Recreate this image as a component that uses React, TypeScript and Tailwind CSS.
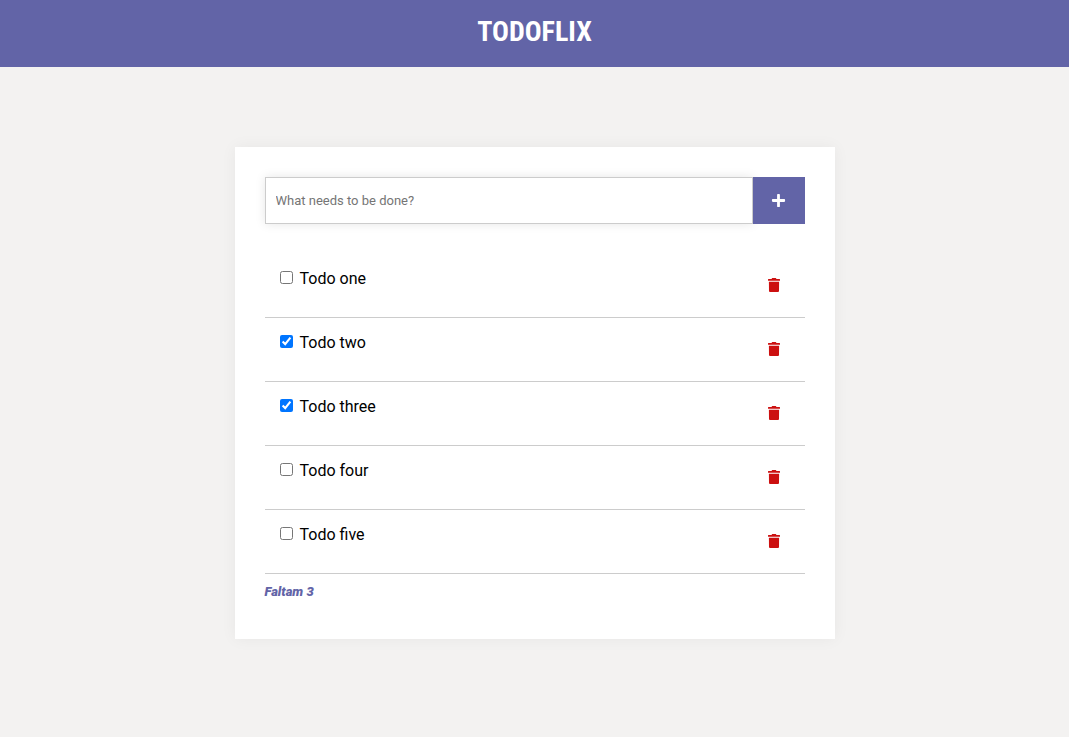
import { useState, type FormEvent } from "react";
import { FaPlus } from "react-icons/fa";

interface Todo {
  id: number;
  title: string;
  done: boolean;
}

const initialTodos: Todo[] = [
  { id: 1, title: "Todo one", done: false },
  { id: 2, title: "Todo two", done: true },
  { id: 3, title: "Todo three", done: true },
  { id: 4, title: "Todo four", done: false },
  { id: 5, title: "Todo five", done: false },
];

function Header() {
  return (
    <header className="flex justify-center bg-[#6264a7] pt-3 pb-4">
      <h1 className="font-['Roboto_Condensed',Roboto,sans-serif] text-[28px] leading-[39px] font-bold text-white">
        TODOFLIX
      </h1>
    </header>
  );
}

function TrashIcon() {
  return (
    <svg
      viewBox="0 0 12 14"
      fill="currentColor"
      aria-hidden="true"
      className="h-3.5 w-3"
    >
      <path d="M4.2 0h3.6l.7.9h3a.5.5 0 0 1 .5.5v1.3H0V1.4a.5.5 0 0 1 .5-.5h3z" />
      <path d="M.9 3.8h10.2l-.1 9.2a1 1 0 0 1-1 1H2a1 1 0 0 1-1-1z" />
    </svg>
  );
}

function TodoForm({ onAdd }: { onAdd: (title: string) => void }) {
  const [title, setTitle] = useState("");

  function submit(event: FormEvent) {
    event.preventDefault();
    if (!title.trim()) return;
    onAdd(title.trim());
    setTitle("");
  }

  return (
    <form onSubmit={submit} className="flex">
      <input
        type="text"
        aria-label="New todo"
        placeholder="What needs to be done?"
        value={title}
        onChange={(event) => setTitle(event.target.value)}
        className="min-w-0 flex-1 border border-[#ccc] bg-white px-2.5 py-3.5 text-[13px] leading-[17px] text-black shadow-[0_0_10px_rgba(0,0,0,0.1)] outline-none placeholder:text-[#757575]"
      />
      <button
        type="submit"
        aria-label="Add todo"
        className="relative flex w-[52px] items-center justify-center bg-[#6264a7] text-white"
      >
        <FaPlus size={15} />
      </button>
    </form>
  );
}

interface TodoItemProps {
  todo: Todo;
  onToggle: () => void;
  onRemove: () => void;
}

function TodoItem({ todo, onToggle, onRemove }: TodoItemProps) {
  return (
    <li className="flex min-h-16 items-start justify-between border-b border-[#ccc] p-[15px]">
      <label className="flex items-start gap-[7px] text-base leading-[19px]">
        <input
          type="checkbox"
          checked={todo.done}
          onChange={onToggle}
          className="mt-0.5 h-[13px] w-[13px]"
        />
        {todo.title}
      </label>
      <button
        type="button"
        aria-label={`Remove ${todo.title}`}
        onClick={onRemove}
        className="flex h-8 w-8 items-center justify-center text-[#cc1010]"
      >
        <TrashIcon />
      </button>
    </li>
  );
}

export default function App() {
  const [todos, setTodos] = useState(initialTodos);
  const remaining = todos.filter((todo) => !todo.done).length;

  return (
    <div className="min-h-screen bg-[#f3f2f1] font-[Roboto,sans-serif] text-black">
      <Header />
      <main className="mx-auto mt-20 w-full max-w-[600px] bg-white p-[30px] shadow-[0_0_15px_rgba(0,0,0,0.05)]">
        <TodoForm
          onAdd={(title) =>
            setTodos([...todos, { id: Date.now(), title, done: false }])
          }
        />
        <ul className="mt-[30px]">
          {todos.map((todo) => (
            <TodoItem
              key={todo.id}
              todo={todo}
              onToggle={() =>
                setTodos(
                  todos.map((item) =>
                    item.id === todo.id ? { ...item, done: !item.done } : item,
                  ),
                )
              }
              onRemove={() =>
                setTodos(todos.filter((item) => item.id !== todo.id))
              }
            />
          ))}
        </ul>
        <p className="py-2.5 text-[13px] leading-[15px] font-black text-[#6264a7] italic">
          Faltam {remaining}
        </p>
      </main>
    </div>
  );
}
